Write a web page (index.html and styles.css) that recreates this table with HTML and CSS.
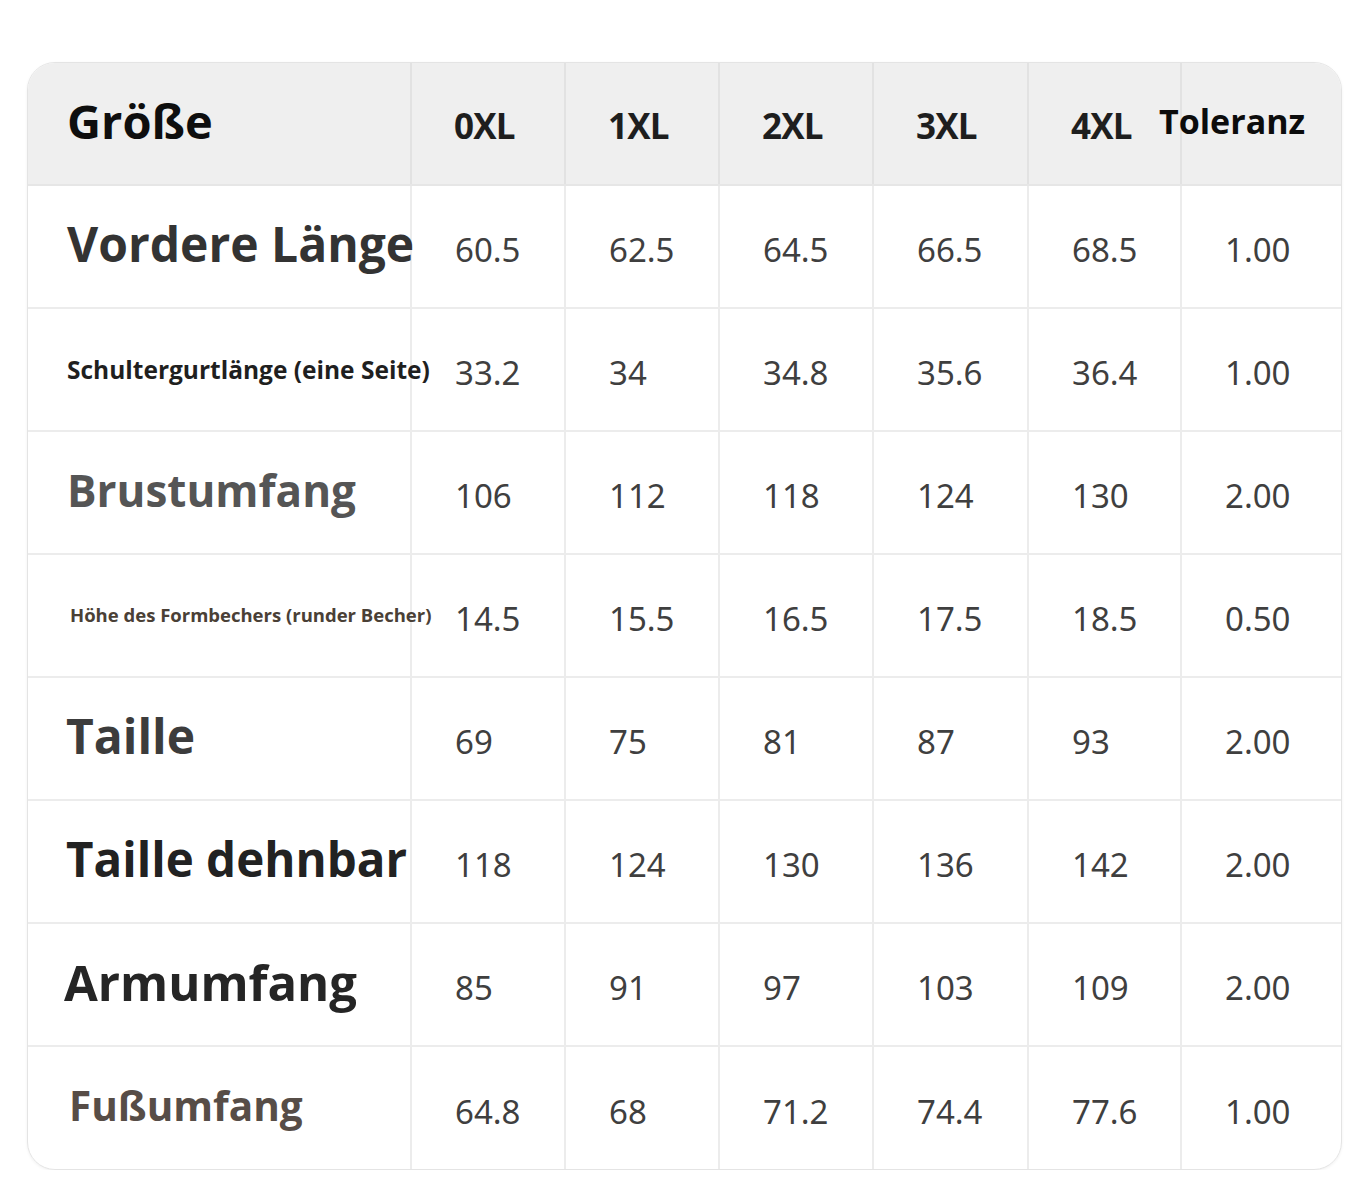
FILE: index.html
```html
<!DOCTYPE html>
<html lang="de">
<head>
<meta charset="utf-8">
<title>Größentabelle</title>
<link rel="stylesheet" href="styles.css">
</head>
<body>
<div class="page">
  <div class="table">
    <div class="row head">
      <div class="cell label l-size">Größe</div>
      <div class="cell hnum">0XL</div>
      <div class="cell hnum">1XL</div>
      <div class="cell hnum">2XL</div>
      <div class="cell hnum">3XL</div>
      <div class="cell hnum">4XL</div>
      <div class="cell htol"><span>Toleranz</span></div>
    </div>
    <div class="row">
      <div class="cell label l-front">Vordere Länge</div>
      <div class="cell num">60.5</div><div class="cell num">62.5</div><div class="cell num">64.5</div><div class="cell num">66.5</div><div class="cell num">68.5</div><div class="cell num">1.00</div>
    </div>
    <div class="row">
      <div class="cell label l-strap">Schultergurtlänge (eine Seite)</div>
      <div class="cell num">33.2</div><div class="cell num">34</div><div class="cell num">34.8</div><div class="cell num">35.6</div><div class="cell num">36.4</div><div class="cell num">1.00</div>
    </div>
    <div class="row">
      <div class="cell label l-chest">Brustumfang</div>
      <div class="cell num">106</div><div class="cell num">112</div><div class="cell num">118</div><div class="cell num">124</div><div class="cell num">130</div><div class="cell num">2.00</div>
    </div>
    <div class="row">
      <div class="cell label l-cup">Höhe des Formbechers (runder Becher)</div>
      <div class="cell num">14.5</div><div class="cell num">15.5</div><div class="cell num">16.5</div><div class="cell num">17.5</div><div class="cell num">18.5</div><div class="cell num">0.50</div>
    </div>
    <div class="row">
      <div class="cell label l-waist">Taille</div>
      <div class="cell num">69</div><div class="cell num">75</div><div class="cell num">81</div><div class="cell num">87</div><div class="cell num">93</div><div class="cell num">2.00</div>
    </div>
    <div class="row">
      <div class="cell label l-stretch">Taille dehnbar</div>
      <div class="cell num">118</div><div class="cell num">124</div><div class="cell num">130</div><div class="cell num">136</div><div class="cell num">142</div><div class="cell num">2.00</div>
    </div>
    <div class="row">
      <div class="cell label l-arm">Armumfang</div>
      <div class="cell num">85</div><div class="cell num">91</div><div class="cell num">97</div><div class="cell num">103</div><div class="cell num">109</div><div class="cell num">2.00</div>
    </div>
    <div class="row last">
      <div class="cell label l-foot">Fußumfang</div>
      <div class="cell num">64.8</div><div class="cell num">68</div><div class="cell num">71.2</div><div class="cell num">74.4</div><div class="cell num">77.6</div><div class="cell num">1.00</div>
    </div>
  </div>
</div>
</body>
</html>
```
FILE: styles.css
```css
html, body {
  margin: 0;
  padding: 0;
  background: #ffffff;
}
.page {
  padding: 62px 0 0 27px;
  width: 1370px;
  box-sizing: border-box;
}
.table {
  width: 1315px;
  border: 1px solid #e4e4e4;
  border-radius: 28px;
  overflow: hidden;
  box-shadow: 0 1px 3px rgba(0,0,0,0.06);
  box-sizing: border-box;
}
.row {
  display: grid;
  grid-template-columns: 384px 154px 154px 154px 155px 153px 159px;
  height: 123px;
  border-bottom: 2px solid #ececec;
  box-sizing: border-box;
}
.row.last { border-bottom: none; height: 122px; }
.row.head { background: #efefef; border-bottom-color: #e6e6e6; }
.cell {
  display: flex;
  align-items: center;
  border-right: 2px solid #ececec;
  box-sizing: border-box;
  white-space: nowrap;
}
.head .cell { border-right-color: #e2e2e2; }
.cell:last-child { border-right: none; }
.label {
  padding-left: 39px;
  padding-bottom: 6px;
  font-family: "Open Sans", "Noto Sans", sans-serif;
  font-weight: 700;
  overflow: visible;
}
.num {
  padding: 6px 0 0 43px;
  font-family: "Noto Sans", "Open Sans", sans-serif;
  font-size: 33px;
  color: #3f3f3f;
}
.hnum {
  padding: 4px 0 0 42px;
  font-family: "Open Sans", "Noto Sans", sans-serif;
  font-weight: 700;
  font-size: 35px;
  color: #1e1e1e;
  letter-spacing: -0.8px;
}
.htol {
  overflow: visible;
}
.htol span {
  margin-left: -23px;
  font-family: "Open Sans", "Noto Sans", sans-serif;
  font-weight: 700;
  font-size: 34px;
  color: #0c0c0c;
  position: relative;
  top: -3px;
}
.l-size { font-size: 47px; color: #0e0e0e; }
.l-front { font-size: 48px; color: #333333; }
.l-strap { font-size: 24.5px; color: #1f1f1f; padding-bottom: 0; }
.l-chest { font-size: 44px; color: #555555; }
.l-cup { font-size: 18.5px; color: #4a4036; padding-left: 42px; padding-bottom: 2px; }
.l-waist { font-size: 48px; color: #3c3c3c; padding-left: 38px; }
.l-stretch { font-size: 47.5px; color: #222222; padding-left: 38px; }
.l-arm { font-size: 49px; color: #252525; padding-left: 36px; }
.l-foot { font-size: 40.5px; color: #574d47; padding-left: 41px; }
```
